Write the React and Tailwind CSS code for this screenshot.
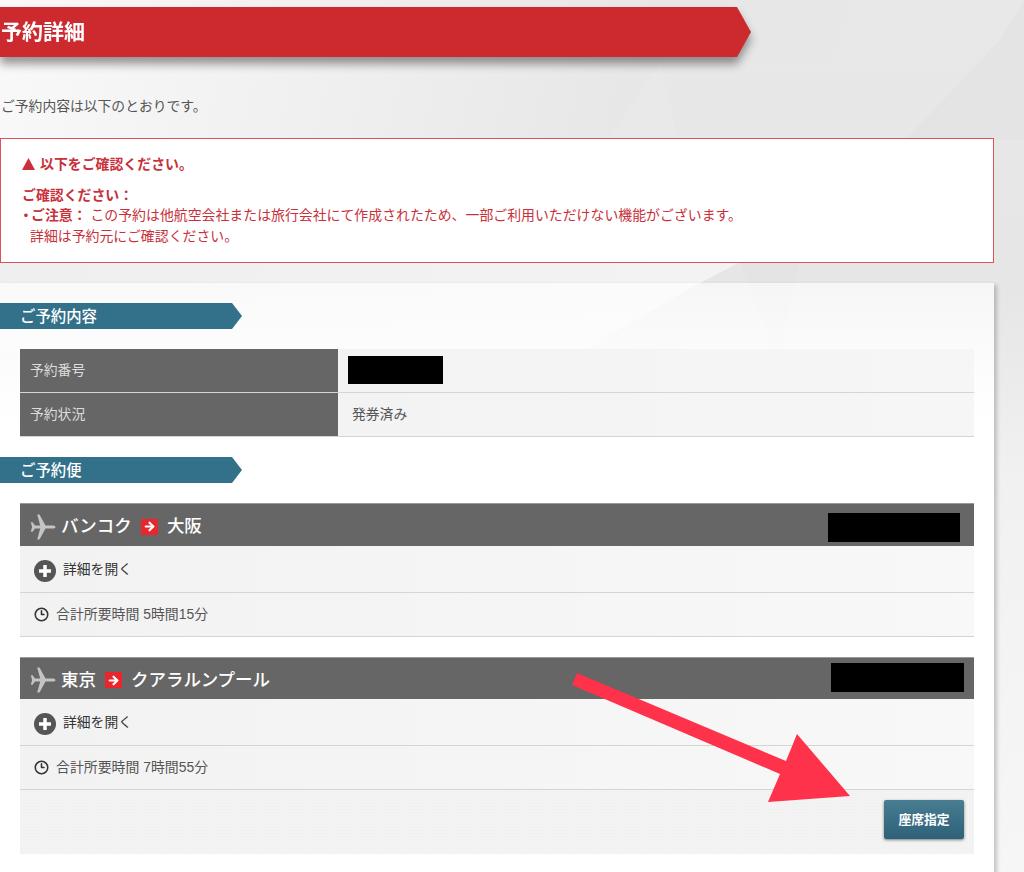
import React from 'react'
import { ArrowRight, Clock3 } from 'lucide-react'

const FONT = "font-['Liberation_Sans','Noto_Sans_CJK_JP',sans-serif]"

const Backdrop = () => (
  <svg className="absolute inset-0 w-full h-full" viewBox="0 0 1024 872" preserveAspectRatio="none">
    <defs>
      <linearGradient id="base" x1="0" y1="0" x2="0" y2="1">
        <stop offset="0" stopColor="#e8e8e8" />
        <stop offset="0.33" stopColor="#e6e6e6" />
        <stop offset="0.55" stopColor="#f1f1f1" />
        <stop offset="1" stopColor="#f6f6f6" />
      </linearGradient>
      <linearGradient id="topLeft" gradientUnits="userSpaceOnUse" x1="0" y1="0" x2="620" y2="140">
        <stop offset="0" stopColor="#f9f9f9" />
        <stop offset="1" stopColor="#e7e7e7" />
      </linearGradient>
      <linearGradient id="band" gradientUnits="userSpaceOnUse" x1="0" y1="262" x2="700" y2="300">
        <stop offset="0" stopColor="#efefef" />
        <stop offset="1" stopColor="#f3f3f3" />
      </linearGradient>
    </defs>
    <rect width="1024" height="872" fill="url(#base)" />
    <polygon points="0,0 850,0 830,60 660,62 620,138 0,138" fill="url(#topLeft)" />
    <polygon points="660,62 678,138 610,138" fill="#e9e9e9" />
    <polygon points="1024,0 1024,140 905,140 1000,40" fill="#e4e4e4" />
    <polygon points="0,262 740,262 700,283 585,349 0,349" fill="url(#band)" />
    <polygon points="740,262 800,262 780,349 772,349" fill="#e4e4e4" />
  </svg>
)

const Arrow = () => (
  <svg className="absolute inset-0 w-full h-full pointer-events-none" viewBox="0 0 1024 872">
    <polygon
      points="577,673 572,685 780,774 768,802 850,796 797,734 786,761"
      fill="#fe324a"
    />
  </svg>
)

const Plane = () => (
  <svg className="mt-[3px]" width="26" height="26" viewBox="0 0 26 26" fill="#c4c4c4">
    <path d="M25.5 13c0-.9-1.4-1.6-3-1.6h-7L9.5.5H7.2l3 10.9H5L2.6 8.2H.8l1.3 4.8-1.3 4.8h1.8L5 14.6h5.2l-3 10.9h2.3l6-10.9h7c1.6 0 3-.7 3-1.6z" />
  </svg>
)

const PlusCircle = () => (
  <svg width="22" height="22" viewBox="0 0 22 22">
    <circle cx="11" cy="11" r="11" fill="#555" />
    <path d="M11 5v12M5 11h12" stroke="#fff" strokeWidth="3.5" />
  </svg>
)

const SectionTag = ({ children }) => (
  <div className="h-[26px] w-[242px] bg-[#33708a] text-white text-[15.4px] font-medium leading-[27px] pl-5 [clip-path:polygon(0_0,232px_0,242px_50%,232px_100%,0_100%)]">
    {children}
  </div>
)

const FlightCard = ({ from, to, total, headClass, maskClass }) => (
  <div>
    <div className={`bg-[#666] border-t border-[#999] flex items-center pl-[10px] text-white ${headClass}`}>
      <Plane />
      <span className="ml-[5px] mt-[3px] text-[17.5px] font-medium">{from}</span>
      <span className="mx-[9px] mt-[3px] w-[17px] h-4 bg-[#e8262c] flex items-center justify-center">
        <ArrowRight size={13} strokeWidth={4} color="#fff" />
      </span>
      <span className="mt-[3px] text-[17.5px] font-medium">{to}</span>
      <div className={`ml-auto h-[29px] bg-black ${maskClass}`} />
    </div>
    <div className="h-[47px] pt-[3px] bg-gradient-to-r from-[#f2f2f2] to-[#f8f8f8] border-b border-[#d5d5d5] flex items-center pl-[14px] text-[13.8px] text-[#333] gap-[7px]">
      <PlusCircle />
      <span>詳細を開く</span>
    </div>
    <div className="h-[44px] bg-gradient-to-r from-[#f2f2f2] to-[#f8f8f8] border-b border-[#d5d5d5] flex items-center pl-[14px] text-[13.9px] text-[#555] gap-[7px]">
      <Clock3 size={15} strokeWidth={2.5} color="#333" />
      <span>合計所要時間 {total}</span>
    </div>
  </div>
)

const App = () => (
  <div className={`relative w-[1024px] h-[872px] overflow-hidden text-[#444] ${FONT}`}>
    <Backdrop />

    <div className="relative pt-[7px]">
      <div className="w-[751px] drop-shadow-[0_7px_5px_rgba(0,0,0,0.4)]">
        <h1 className="h-[50px] bg-[#cd2a30] text-white text-[21px] font-bold leading-[50px] pl-[1px] [clip-path:polygon(0_0,737px_0,751px_50%,737px_100%,0_100%)]">
          予約詳細
        </h1>
      </div>

      <p className="mt-[40px] h-[19px] text-[13.8px] leading-[19px] pl-[1px] text-[#555]">
        ご予約内容は以下のとおりです。
      </p>

      <div className="mt-[22px] w-[994px] h-[125px] bg-white border border-[#d9535a] pt-[15px] pl-[21px] text-[#c8303a] text-[13.9px]">
        <p className="font-bold leading-[20px] flex items-center gap-[5px]">
          <svg width="13" height="12" viewBox="0 0 13 12" fill="#c8303a">
            <path d="M6.5 0 13 12H0z" />
          </svg>
          以下をご確認ください。
        </p>
        <p className="mt-[11px] font-bold leading-[20px]">ご確認ください：</p>
        <p className="leading-[21px]">
          <span className="inline-block w-[12px] -ml-[3px] font-bold">・</span>
          <span className="font-bold">ご注意：</span> この予約は他航空会社または旅行会社にて作成されたため、一部ご利用いただけない機能がございます。
        </p>
        <p className="leading-[21px] pl-[8px]">詳細は予約元にご確認ください。</p>
      </div>

      <div className="mt-[20px] w-[994px] h-[600px] bg-[linear-gradient(to_bottom,rgba(255,255,255,0.65),#fff_140px)] shadow-[3px_2px_4px_rgba(0,0,0,0.2)] pt-[20px]">
        <SectionTag>ご予約内容</SectionTag>

        <div className="mx-5 mt-5 text-[13.8px]">
          <div className="flex h-[44px] border-b border-[#d5d5d5]">
            <div className="w-[318px] bg-[#666] text-[#ddd] pl-[10px] pt-[2px] flex items-center">予約番号</div>
            <div className="flex-1 bg-gradient-to-r from-[#f3f3f3] to-[#f6f6f6] pl-[10px] pt-[7px]">
              <div className="w-[95px] h-[28px] bg-black" />
            </div>
          </div>
          <div className="flex h-[44px] border-b border-[#d5d5d5]">
            <div className="w-[318px] bg-[#666] text-[#ddd] pl-[10px] pt-[2px] flex items-center">予約状況</div>
            <div className="flex-1 bg-gradient-to-r from-[#f3f3f3] to-[#f6f6f6] pl-[14px] pt-[2px] flex items-center text-[#555]">発券済み</div>
          </div>
        </div>

        <div className="mt-[20px]">
          <SectionTag>ご予約便</SectionTag>
        </div>

        <div className="mx-5 mt-5 flex flex-col gap-[20px]">
          <FlightCard from="バンコク" to="大阪" total="5時間15分" headClass="h-[43px]" maskClass="w-[132px] mr-[14px] mt-[5px]" />
          <FlightCard from="東京" to="クアラルンプール" total="7時間55分" headClass="h-[42px]" maskClass="w-[133px] mr-[10px] mb-[2px]" />
        </div>

        <div className="mx-5 h-[64px] bg-[#f3f3f3] bg-[radial-gradient(#eeeeee_1px,transparent_1px)] bg-[length:3px_3px] flex justify-end pt-[10px] pr-[10px]">
          <button className="w-[80px] h-[39px] rounded-[2px] bg-gradient-to-b from-[#487d92] to-[#2e6178] text-white text-[12.8px] font-bold shadow-[0_1px_3px_rgba(0,0,0,0.5)]">
            座席指定
          </button>
        </div>
      </div>
    </div>

    <Arrow />
  </div>
)

export default App
